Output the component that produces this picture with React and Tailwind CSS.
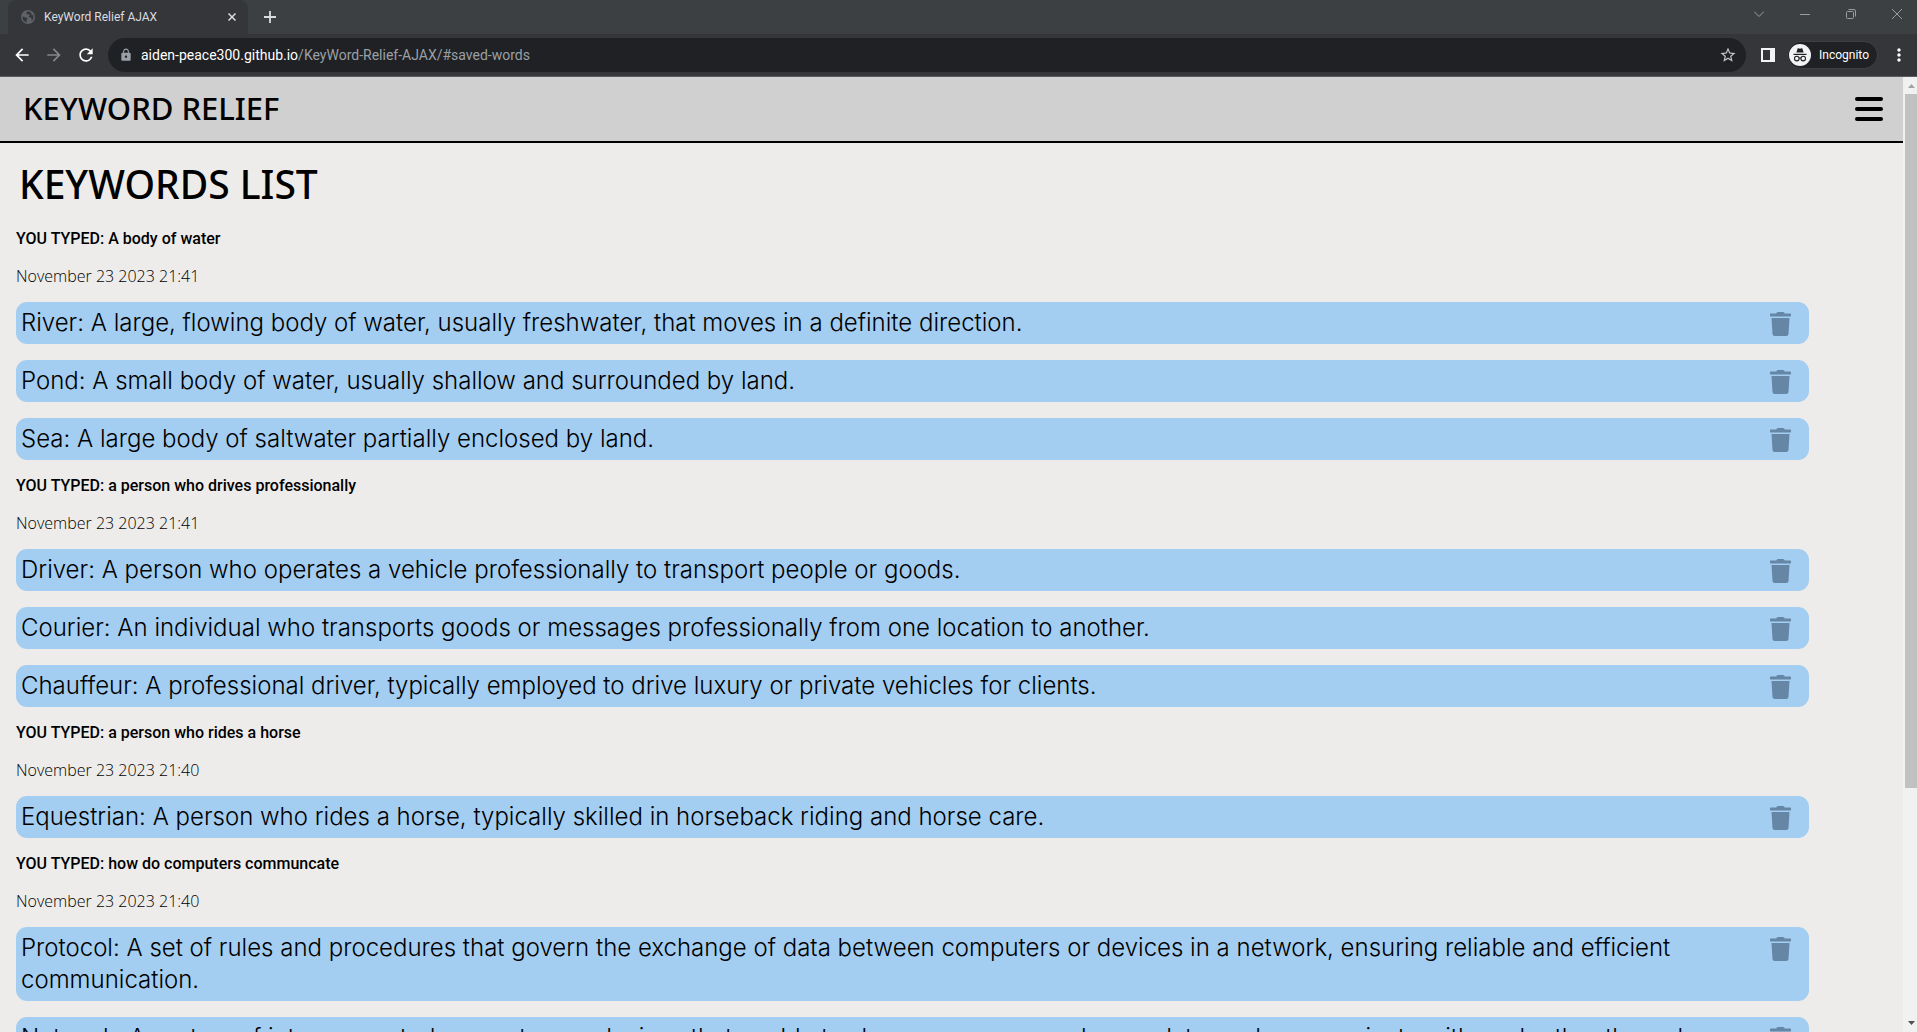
import React from "react";
import { FaTrash } from "react-icons/fa";
import { MdArrowBack, MdArrowForward, MdRefresh, MdLock, MdStarBorder, MdMoreVert } from "react-icons/md";

const GROUPS = [
  {
    query: "A body of water",
    date: "November 23 2023 21:41",
    words: [
      "River: A large, flowing body of water, usually freshwater, that moves in a definite direction.",
      "Pond: A small body of water, usually shallow and surrounded by land.",
      "Sea: A large body of saltwater partially enclosed by land.",
    ],
  },
  {
    query: "a person who drives professionally",
    date: "November 23 2023 21:41",
    words: [
      "Driver: A person who operates a vehicle professionally to transport people or goods.",
      "Courier: An individual who transports goods or messages professionally from one location to another.",
      "Chauffeur: A professional driver, typically employed to drive luxury or private vehicles for clients.",
    ],
  },
  {
    query: "a person who rides a horse",
    date: "November 23 2023 21:40",
    words: ["Equestrian: A person who rides a horse, typically skilled in horseback riding and horse care."],
  },
  {
    query: "how do computers communcate",
    date: "November 23 2023 21:40",
    words: [
      "Protocol: A set of rules and procedures that govern the exchange of data between computers or devices in a network, ensuring reliable and efficient communication.",
      "Network: A system of interconnected computers or devices that enable to share resources, exchange data, and communicate with each other through physical or wireless connections.",
    ],
  },
];

function Globe() {
  return (
    <svg viewBox="0 0 14 14" className="size-[14px] shrink-0" aria-hidden="true">
      <circle cx="7" cy="7" r="7" fill="#5f6368" />
      <path
        d="M1.6 6.2 4.4 7.6 6.2 7.9 6.5 9.3 5.4 10.2 5.6 12.4A5.6 5.6 0 0 1 1.6 6.2ZM6 1.6 5.2 3.2 6.2 4.6 8.2 4.2 8.6 5.8 7.4 6.8 9.6 7.4 10.8 9 10.4 11.2A5.6 5.6 0 0 0 12.4 5.6L10.6 4.8 9.8 2.2 8 1.5Z"
        fill="#35363a"
      />
    </svg>
  );
}

function IncognitoIcon() {
  return (
    <svg viewBox="0 0 22 22" className="size-[22px] shrink-0" aria-hidden="true">
      <circle cx="11" cy="11" r="11" fill="#f1f3f4" />
      <path d="M7.4 8.6 8.6 4.6Q8.8 4 9.4 4.2L11 4.7 12.6 4.2Q13.2 4 13.4 4.6L14.6 8.6Z" fill="#202124" />
      <path d="M4.5 10.4H17.5" stroke="#202124" strokeWidth="1.2" />
      <g fill="none" stroke="#202124" strokeWidth="1.1">
        <circle cx="7.8" cy="14.6" r="2.3" />
        <circle cx="14.2" cy="14.6" r="2.3" />
        <path d="M10.1 14.3Q11 13.7 11.9 14.3" />
      </g>
    </svg>
  );
}

function TabStrip() {
  return (
    <div className="flex h-[34px] bg-[#3c4043]">
      <div className="ml-2 flex w-[240px] items-center gap-2 rounded-t-lg bg-[#35363a] pr-3 pl-[13px]">
        <Globe />
        <span className="flex-1 pl-px text-xs text-[#dadce0]">KeyWord Relief AJAX</span>
        <button type="button" aria-label="Close tab" className="text-[#dadce0]">
          <svg viewBox="0 0 8 8" className="size-2" aria-hidden="true">
            <path d="M.5.5 7.5 7.5M7.5.5.5 7.5" stroke="currentColor" strokeWidth="1.5" />
          </svg>
        </button>
      </div>
      <button type="button" aria-label="New tab" className="ml-4 text-[#dadce0]">
        <svg viewBox="0 0 12 12" className="size-3" aria-hidden="true">
          <path d="M6 0V12M0 6H12" stroke="currentColor" strokeWidth="1.8" />
        </svg>
      </button>
      <div className="ml-auto flex h-7 items-center gap-9 pr-[15px] text-[#9a9da0]">
        <button type="button" aria-label="Search tabs">
          <svg viewBox="0 0 10 10" className="size-[10px]" fill="none" stroke="currentColor" aria-hidden="true">
            <path d="M0 2.5 5 7.5 10 2.5" />
          </svg>
        </button>
        <button type="button" aria-label="Minimize">
          <svg viewBox="0 0 10 10" className="size-[10px]" fill="none" stroke="currentColor" aria-hidden="true">
            <path d="M0 5.5H10" />
          </svg>
        </button>
        <button type="button" aria-label="Restore">
          <svg viewBox="0 0 10 10" className="size-[10px]" fill="none" stroke="currentColor" aria-hidden="true">
            <rect x=".5" y="2.5" width="7" height="7" rx="1" />
            <path d="M2.5.5H8Q9.5.5 9.5 2V7.5" />
          </svg>
        </button>
        <button type="button" aria-label="Close window">
          <svg viewBox="0 0 10 10" className="size-[10px]" fill="none" stroke="currentColor" aria-hidden="true">
            <path d="M0 0 10 10M10 0 0 10" />
          </svg>
        </button>
      </div>
    </div>
  );
}

function Toolbar() {
  return (
    <div className="flex h-[43px] items-center border-b border-[#5b5c61] bg-[#35363a] pr-2 pl-3">
      <button type="button" aria-label="Back" className="mr-3 text-white">
        <MdArrowBack className="size-5" />
      </button>
      <button type="button" aria-label="Forward" className="mr-3 text-[#85868a]">
        <MdArrowForward className="size-5" />
      </button>
      <button type="button" aria-label="Reload" className="mr-3 text-white">
        <MdRefresh className="size-5" />
      </button>
      <div className="flex h-[34px] flex-1 items-center rounded-full bg-[#202124] pr-[9px] pl-[11px]">
        <MdLock className="mr-2 size-[14px] text-[#9aa0a6]" />
        <a href="#saved-words" className="flex-1 text-sm text-[#9aa0a6]">
          <span className="text-white">aiden-peace300.github.io</span>/KeyWord-Relief-AJAX/#saved-words
        </a>
        <button type="button" aria-label="Bookmark this tab" className="text-[#c4c7ca]">
          <MdStarBorder className="size-[18px]" />
        </button>
      </div>
      <button type="button" aria-label="Side panel" className="ml-[15px]">
        <svg viewBox="0 0 14 14" className="size-[14px]" aria-hidden="true">
          <path d="M0 0H14V14H0ZM2 2V12H9V2Z" fill="#f1f3f4" fillRule="evenodd" />
        </svg>
      </button>
      <button
        type="button"
        className="ml-3 flex h-7 items-center gap-2 rounded-full border border-[#3f4044] bg-[#202124] pr-2 pl-px text-xs text-white"
      >
        <IncognitoIcon />
        Incognito
      </button>
      <button type="button" aria-label="Menu" className="ml-[11px] text-white">
        <MdMoreVert className="size-5" />
      </button>
    </div>
  );
}

function Word({ text }) {
  return (
    <li className="flex items-start justify-between rounded-[11px] bg-[#a3cdf1] py-[5px] pr-[18px] pl-[5px]">
      <p className="font-['Inter',sans-serif] text-2xl leading-8 font-light">{text}</p>
      <button type="button" aria-label="Delete word" className="mt-[5px] shrink-0 text-[#6587a5]">
        <FaTrash className="h-6 w-[21px]" />
      </button>
    </li>
  );
}

function Scrollbar() {
  return (
    <div className="flex w-[14px] shrink-0 flex-col bg-[#f1f1f1]" aria-hidden="true">
      <svg viewBox="0 0 14 17" className="h-[17px] w-[14px]">
        <path d="M5 11 8.5 7 12 11Z" fill="#a3a3a3" />
      </svg>
      <div className="ml-[2px] h-[72.7%] bg-[#c1c1c1]" />
      <svg viewBox="0 0 14 17" className="mt-auto h-[17px] w-[14px]">
        <path d="M5 6 8.5 10 12 6Z" fill="#505050" />
      </svg>
    </div>
  );
}

export default function App() {
  return (
    <div className="flex h-screen flex-col overflow-hidden font-['Roboto',sans-serif]">
      <TabStrip />
      <Toolbar />
      <div className="flex min-h-0 flex-1">
        <div className="flex-1 overflow-hidden bg-[#eeecea] text-black">
          <header className="flex h-[66px] items-center justify-between border-b-2 border-black bg-[#d0d0d0] pr-5 pl-[23px]">
            <h1 className="pb-[2px] font-['Noto_Sans',sans-serif] text-[31px] leading-10 font-medium">KEYWORD RELIEF</h1>
            <button type="button" aria-label="Open menu" className="flex flex-col gap-[6px]">
              <span className="h-1 w-7 rounded-full bg-black" />
              <span className="h-1 w-7 rounded-full bg-black" />
              <span className="h-1 w-7 rounded-full bg-black" />
            </button>
          </header>
          <main className="mr-[94px] ml-4">
            <h2 className="pt-[14px] pb-[2px] pl-[3px] font-['Noto_Sans',sans-serif] text-[39px] leading-[54px] font-medium">
              KEYWORDS LIST
            </h2>
            {GROUPS.map((group) => (
              <section key={group.query} className="pt-4">
                <h3 className="text-base leading-[20px] font-medium">YOU TYPED: {group.query}</h3>
                <p className="mt-[17px] font-['Open_Sans',sans-serif] text-base leading-[20px] font-light">
                  {group.date}
                </p>
                <ul className="mt-4 flex flex-col gap-4">
                  {group.words.map((word) => (
                    <Word key={word} text={word} />
                  ))}
                </ul>
              </section>
            ))}
          </main>
        </div>
        <Scrollbar />
      </div>
    </div>
  );
}
